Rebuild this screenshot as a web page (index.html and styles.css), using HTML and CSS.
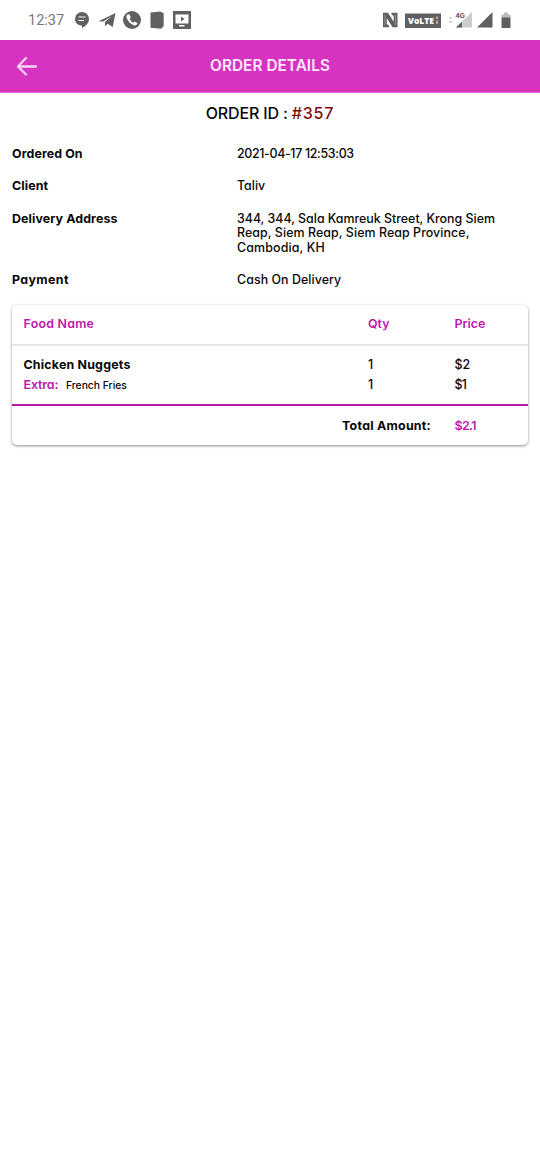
FILE: index.html
```html
<!DOCTYPE html>
<html lang="en">
<head>
<meta charset="utf-8">
<title>Order Details</title>
<link rel="stylesheet" href="styles.css">
</head>
<body>
<div class="status">
  <span class="clock">12:37</span>
  <svg class="notifications" width="118" height="20" viewBox="75 10 118 20" fill="#606060">
    <path d="M82 12a7 7 0 0 0-7 7c0 4 3 6.500 7 6.500V28c4-2 7-5 7-9a7 7 0 0 0-7-7z"/>
    <path d="M78.500 17h7M78.500 20.500h5.500" stroke="#fff" stroke-width="1.200"/>
    <path d="M98.500 21.200 115.500 13l-2.800 14-5-3.200-2.500 2.400-.3-4.200 7-6-8.600 5.600z"/>
    <circle cx="132" cy="20" r="9"/>
    <path d="M127.500 14.500c-1.500 1-1.300 3 .2 5.600 1.700 2.800 4 4.700 6.500 5.300 1.600.3 3-.7 3.300-2.200l-2.700-1.700-1.700 1.200c-1.600-.8-2.700-2-3.400-3.600l1-1.800-1.300-3z" fill="#fff"/>
    <path d="M150.500 12.500 160 11.500l3.700 1.800V26l-2.500 2.700-10.700-1z"/>
    <path d="M173 11h18v18h-18z"/>
    <path d="M175.500 14.500h13v9h-13zM179 25h5.500v1.400H179z" fill="#fff"/>
    <path d="m181 16.500 3.500 2.500-3.500 2.500z"/>
  </svg>
  <svg class="signals" width="130" height="22" viewBox="382 9 130 22" fill="#606060">
    <path d="M383 12.800h5l5.700 9V16l-2.200-1.500v-1.700h6V27.300h-5L386.800 18v6l2.200 1.600v1.700h-6z"/>
    <path d="M385 14.800v10.500M395.500 14.800v10.500" stroke="#b5b5b5" stroke-width=".6"/>
    <rect x="405" y="13.500" width="36" height="14.500"/>
    <text x="408" y="24.300" class="volte" textLength="26">VoLTE</text>
    <path d="M437 16.500v2.500m0 1.500V24" stroke="#ddd" stroke-width="1.200"/>
    <path d="m448.500 18.500 2-2.200 2 2.200zM448.500 21l2 2.200 2-2.200z" fill="#c6c6c6"/>
    <path d="M456 27.500 472 12v15.500z" fill="#cdcdcd"/>
    <path d="M456 27.500 462 21.700v5.800z"/>
    <text x="455.500" y="17.800" class="network">4G</text>
    <path d="M477 27.500 492.500 12v15.500z"/>
    <path d="M501.500 18v-3.500h2.500V12.500h4v2h2.500V18z" fill="#b9b9b9"/>
    <path d="M501.500 17.500h9V28h-9z"/>
  </svg>
</div>
<header class="appbar">
  <svg class="back" width="22" height="20" viewBox="0 0 22 20" fill="none" stroke="#fbd3f4" stroke-width="2.300" stroke-linecap="round" stroke-linejoin="round"><path d="M20 10.500H2.500M10 2 2 10.500l8 8"/></svg>
  <h1>ORDER DETAILS</h1>
</header>
<main>
  <h2><span>ORDER ID :</span><span class="number">#357</span></h2>
  <dl>
    <dt>Ordered On</dt><dd class="date">2021-04-17 12:53:03</dd>
    <dt>Client</dt><dd>Taliv</dd>
    <dt>Delivery Address</dt><dd class="address">344, 344, Sala Kamreuk Street, Krong Siem<br><span class="province">Reap, Siem Reap, Siem Reap Province,</span><br><span class="country">Cambodia, KH</span></dd>
    <dt class="payment">Payment</dt><dd class="method">Cash On Delivery</dd>
  </dl>
  <section class="card">
    <div class="row head"><span class="food">Food Name</span><span>Qty</span><span>Price</span></div>
    <div class="items">
      <div class="row"><b class="item">Chicken Nuggets</b><span>1</span><span>$2</span></div>
      <div class="row"><span class="extra"><em>Extra:</em><small>French Fries</small></span><span>1</span><span class="tight">$1</span></div>
    </div>
    <div class="total"><b>Total Amount:</b><strong>$2.1</strong></div>
  </section>
</main>
</body>
</html>
```

FILE: styles.css
```css
* { box-sizing: border-box; }
body {
  margin: 0;
  min-height: 1170px;
  background: #fff;
  color: #080808;
  font: 500 12.400px/14.600px Inter, "Liberation Sans", sans-serif;
  font-feature-settings: "cv11";
  white-space: nowrap;
}
h1, h2, dl, dd { margin: 0; font-weight: 500; }
.status { display: flex; height: 40px; padding: 0 28px; align-items: center; }
.clock { width: 47px; padding-top: 1px; color: #777; font: 400 14.500px/20px Roboto, sans-serif; }
.signals { margin-left: auto; }
.volte { fill: #fff; font: 800 8.500px "Open Sans", sans-serif; }
.network { fill: #444; font: 500 7.500px Roboto, sans-serif; }
.appbar {
  display: grid;
  grid-template-columns: 1fr auto 1fr;
  align-items: center;
  height: 53px;
  padding: 0 16px;
  background: #d633c1;
  border-bottom: 1px solid #dd6bce;
}
h1 { color: #ffe9fc; font-size: 15.300px; font-weight: 600; line-height: 20px; letter-spacing: .07px; }
h2 { display: flex; justify-content: center; gap: 4px; padding-top: 10px; font-size: 16px; line-height: 20px; letter-spacing: -.15px; }
.number { color: #7b0d0d; letter-spacing: .8px; }
dl { display: grid; grid-template-columns: 225px 1fr; row-gap: 17.700px; padding: 24.200px 12px 0; }
dt, b { font-weight: 700; }
dt { letter-spacing: .1px; }
.payment { letter-spacing: .38px; }
.date { letter-spacing: -.33px; }
.province { letter-spacing: .08px; }
.country { letter-spacing: .16px; }
.method { letter-spacing: .07px; }
.card {
  margin: 17.500px 12px 0;
  height: 140px;
  border-radius: 5px;
  background: #fff;
  box-shadow: 0 1px 3px rgba(0,0,0,.45);
}
.row { display: grid; grid-template-columns: 344.500px 86.500px 1fr; padding-left: 11.500px; line-height: 20.500px; }
.head { height: 41px; padding-top: 9px; border-bottom: 2px solid #e5e5e5; }
.head, em, strong { color: #bd17aa; font-style: normal; font-weight: 600; }
.food { letter-spacing: .25px; }
.items { height: 60px; padding-top: 8.500px; border-bottom: 2px solid #bd17aa; }
.item { letter-spacing: .2px; }
.tight { letter-spacing: -.8px; }
.extra { display: flex; align-items: baseline; }
.extra em { width: 42.500px; letter-spacing: -.1px; }
small { font-size: 10.300px; }
.total { display: grid; grid-template-columns: 419px 1fr; column-gap: 23.500px; padding-top: 10px; line-height: 20px; }
.total b { text-align: right; letter-spacing: .25px; }
.total strong { letter-spacing: -.6px; }
```
